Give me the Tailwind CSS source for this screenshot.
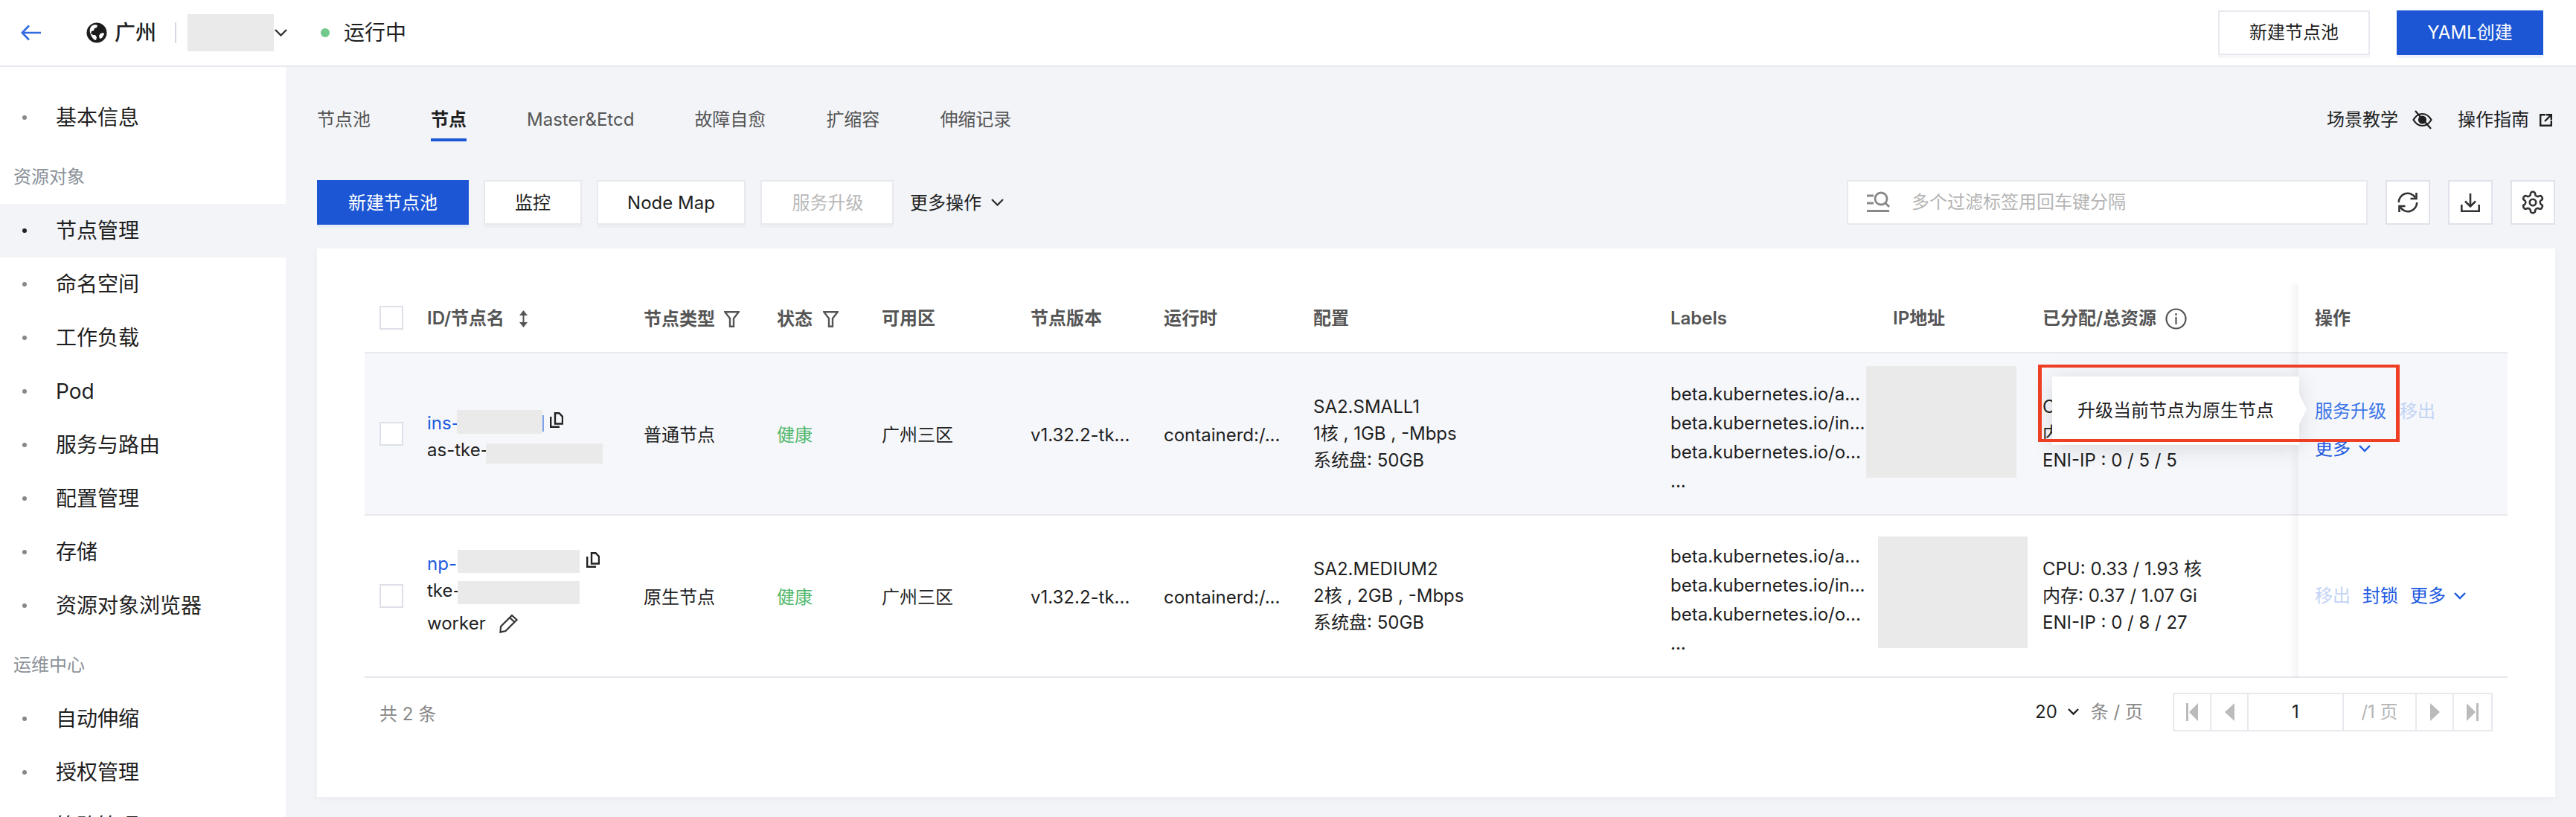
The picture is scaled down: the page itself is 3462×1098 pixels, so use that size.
<!DOCTYPE html>
<html lang="zh-CN">
<head>
<meta charset="utf-8">
<script src="https://cdn.jsdelivr.net/npm/@tailwindcss/browser@4"></script>
</head>
<body>
<div class="w-[3462px] h-[1098px] overflow-hidden bg-[#f2f4f8] flex flex-col text-[24px] text-[#1f1f1f] [font-family:Inter,'Noto_Sans_CJK_SC',sans-serif]">

  <header class="h-[90px] shrink-0 bg-white border-b-2 border-[#e8e9ef] flex items-center pl-[28px] pr-[44px]">
    <svg class="w-[27px] h-[22px]" viewBox="0 0 27 22" fill="none" stroke="#2f6bdf" stroke-width="2.6"><path d="M27 11H2M11 1.5 1.8 11l9.2 9.5"/></svg>
    <svg class="w-[28px] h-[28px] ml-[61px]" viewBox="0 0 28 28"><circle cx="14" cy="14" r="13.5" fill="#1c1c1c"/><path d="M7 5c3-2 6-2 8-1l-1 3-3 1-1 3-3 1-1 3 3 2 3 0 2 3-1 4-3-1-3-4-2-5c-1-3 0-7 2-9zM19 15l4-1 1 2-3 5-3 1-1-4z" fill="#fff"/></svg>
    <span class="ml-[10px] text-[28px] font-medium">广州</span>
    <span class="ml-[25px] w-[2px] h-[28px] bg-[#d4d9e4]"></span>
    <span class="ml-[15px] w-[116px] h-[50px] bg-[#eaeaea]"></span>
    <svg class="ml-[1px] w-[17px] h-[10px]" viewBox="0 0 17 10" fill="none" stroke="#333" stroke-width="2.4"><path d="M1 1l7.500 7.500L16 1"/></svg>
    <span class="ml-[45px] w-[12px] h-[12px] rounded-full bg-[#71c98b]"></span>
    <span class="ml-[19px] text-[28px]">运行中</span>
    <div class="ml-auto flex gap-[36px]">
      <button class="w-[204px] h-[60px] bg-white border-2 border-[#e8e9ef] shadow-[0_4px_0_#f7f7fa]">新建节点池</button>
      <button class="w-[197px] h-[60px] bg-[#1c56d4] text-white shadow-[0_4px_0_#eef3fb]">YAML创建</button>
    </div>
  </header>

  <div class="flex flex-1 min-h-0">
    <aside class="w-[384px] shrink-0 bg-white pt-[32px] text-[28px] overflow-hidden">
      <div class="h-[72px] flex items-center pl-[30px]"><span class="w-[6px] h-[6px] rounded-full bg-[#888]"></span><span class="ml-[39px]">基本信息</span></div>
      <div class="h-[80px] pt-[8px] flex items-center pl-[18px] text-[24px] text-[#8b9299]">资源对象</div>
      <div class="h-[72px] flex items-center pl-[30px] bg-[#f2f4f8]"><span class="w-[6px] h-[6px] rounded-full bg-[#222]"></span><span class="ml-[39px]">节点管理</span></div>
      <div class="h-[72px] flex items-center pl-[30px]"><span class="w-[6px] h-[6px] rounded-full bg-[#888]"></span><span class="ml-[39px]">命名空间</span></div>
      <div class="h-[72px] flex items-center pl-[30px]"><span class="w-[6px] h-[6px] rounded-full bg-[#888]"></span><span class="ml-[39px]">工作负载</span></div>
      <div class="h-[72px] flex items-center pl-[30px]"><span class="w-[6px] h-[6px] rounded-full bg-[#888]"></span><span class="ml-[39px]">Pod</span></div>
      <div class="h-[72px] flex items-center pl-[30px]"><span class="w-[6px] h-[6px] rounded-full bg-[#888]"></span><span class="ml-[39px]">服务与路由</span></div>
      <div class="h-[72px] flex items-center pl-[30px]"><span class="w-[6px] h-[6px] rounded-full bg-[#888]"></span><span class="ml-[39px]">配置管理</span></div>
      <div class="h-[72px] flex items-center pl-[30px]"><span class="w-[6px] h-[6px] rounded-full bg-[#888]"></span><span class="ml-[39px]">存储</span></div>
      <div class="h-[72px] flex items-center pl-[30px]"><span class="w-[6px] h-[6px] rounded-full bg-[#888]"></span><span class="ml-[39px]">资源对象浏览器</span></div>
      <div class="h-[80px] pt-[8px] flex items-center pl-[18px] text-[24px] text-[#8b9299]">运维中心</div>
      <div class="h-[72px] flex items-center pl-[30px]"><span class="w-[6px] h-[6px] rounded-full bg-[#888]"></span><span class="ml-[39px]">自动伸缩</span></div>
      <div class="h-[72px] flex items-center pl-[30px]"><span class="w-[6px] h-[6px] rounded-full bg-[#888]"></span><span class="ml-[39px]">授权管理</span></div>
      <div class="h-[72px] flex items-center pl-[30px]"><span class="w-[6px] h-[6px] rounded-full bg-[#888]"></span><span class="ml-[39px]">策略管理</span></div>
    </aside>

    <main class="flex-1 min-w-0 pl-[42px] pr-[28px] pt-[42px]">
      <div class="flex items-start justify-between">
        <nav class="flex gap-[81px] text-[#555]">
          <a class="h-[58px] pt-[4px] border-b-4 border-transparent flex items-center">节点池</a>
          <a class="h-[58px] pt-[4px] border-b-4 border-[#1c56d4] flex items-center font-semibold text-[#1f1f1f]">节点</a>
          <a class="h-[58px] pt-[4px] border-b-4 border-transparent flex items-center">Master&amp;Etcd</a>
          <a class="h-[58px] pt-[4px] border-b-4 border-transparent flex items-center">故障自愈</a>
          <a class="h-[58px] pt-[4px] border-b-4 border-transparent flex items-center">扩缩容</a>
          <a class="h-[58px] pt-[4px] border-b-4 border-transparent flex items-center">伸缩记录</a>
        </nav>
        <div class="flex items-center h-[58px] pr-[4px]">
          <span>场景教学</span>
          <svg class="ml-[19px] w-[27px] h-[26px]" viewBox="0 0 27 26" fill="none" stroke="#1f1f1f" stroke-width="2.200"><path d="M1.500 13C5 7 9 5 13.500 5S22 7 25.500 13C22 19 18 21 13.500 21S5 19 1.500 13z"/><circle cx="13.500" cy="13" r="4.500" fill="#1f1f1f"/><path d="M4 1l21 24"/></svg>
          <span class="ml-[34px]">操作指南</span>
          <svg class="ml-[14px] w-[17px] h-[17px]" viewBox="0 0 17 17" fill="none" stroke="#1f1f1f" stroke-width="2.400"><path d="M8 1.200H1.200v14.600h14.600V9M9 1.200h6.800V8M15.500 1.500 7 10"/></svg>
        </div>
      </div>

      <div class="mt-[52px] flex items-center h-[60px]">
        <button class="w-[204px] h-[60px] pt-[2px] bg-[#1c56d4] text-white shadow-[0_4px_0_#e6ecf5]">新建节点池</button>
        <button class="ml-[20px] w-[132px] h-[60px] pt-[2px] bg-white border-2 border-[#e8e9ef] shadow-[0_4px_0_#eceef4]">监控</button>
        <button class="ml-[20px] w-[200px] h-[60px] pt-[2px] bg-white border-2 border-[#e8e9ef] shadow-[0_4px_0_#eceef4]">Node Map</button>
        <button class="ml-[20px] w-[179px] h-[60px] pt-[2px] pl-[2px] bg-white border-2 border-[#e8e9ef] text-[#b9b9b9] shadow-[0_4px_0_#eceef4]">服务升级</button>
        <span class="ml-[22px] pt-[2px]">更多操作</span>
        <svg class="ml-[13px] w-[17px] h-[10px]" viewBox="0 0 17 10" fill="none" stroke="#333" stroke-width="2.400"><path d="M1 1l7.500 7.500L16 1"/></svg>
        <div class="ml-auto w-[700px] h-[60px] bg-white border-2 border-[#e8e9ef] flex items-center pl-[24px]">
          <svg class="w-[32px] h-[32px]" viewBox="0 0 32 32" fill="none" stroke="#888" stroke-width="2.800"><path d="M1 7h9M1 17h9M1 27.500h30"/><circle cx="20" cy="11" r="8"/><path d="M26 17l5 5"/></svg>
          <span class="ml-[29px] text-[#b5b5b5]">多个过滤标签用回车键分隔</span>
        </div>
        <button class="ml-[24px] w-[60px] h-[60px] bg-white border-2 border-[#e0e2ea] flex items-center justify-center">
          <svg class="w-[28px] h-[28px]" viewBox="0 0 28 28" fill="none" stroke="#333" stroke-width="2.600"><path d="M1.800 14A12 12 0 0 1 24 7.500M26.200 14A12 12 0 0 1 4 20.500"/><path d="M25.500 1v8h-8M2.500 27v-8h8"/></svg>
        </button>
        <button class="ml-[24px] w-[60px] h-[60px] bg-white border-2 border-[#e0e2ea] flex items-center justify-center">
          <svg class="w-[26px] h-[25px]" viewBox="0 0 26 25" fill="none" stroke="#333" stroke-width="2.600"><path d="M13 0v17M6 10.500l7 7 7-7M1.300 15v8.700h23.400V15"/></svg>
        </button>
        <button class="ml-[24px] w-[60px] h-[60px] bg-white border-2 border-[#e0e2ea] flex items-center justify-center">
          <svg class="w-[34px] h-[34px]" viewBox="0 0 24 24" fill="none" stroke="#333" stroke-width="1.800"><path d="M12.220 2h-.44a2 2 0 0 0-2 2v.18a2 2 0 0 1-1 1.730l-.43.25a2 2 0 0 1-2 0l-.15-.08a2 2 0 0 0-2.730.73l-.22.38a2 2 0 0 0 .73 2.730l.15.1a2 2 0 0 1 1 1.720v.51a2 2 0 0 1-1 1.740l-.15.09a2 2 0 0 0-.73 2.730l.22.38a2 2 0 0 0 2.730.73l.15-.08a2 2 0 0 1 2 0l.43.25a2 2 0 0 1 1 1.730V20a2 2 0 0 0 2 2h.44a2 2 0 0 0 2-2v-.18a2 2 0 0 1 1-1.730l.43-.25a2 2 0 0 1 2 0l.15.08a2 2 0 0 0 2.730-.73l.22-.39a2 2 0 0 0-.73-2.730l-.15-.08a2 2 0 0 1-1-1.740v-.5a2 2 0 0 1 1-1.740l.15-.09a2 2 0 0 0 .73-2.730l-.22-.38a2 2 0 0 0-2.730-.73l-.15.08a2 2 0 0 1-2 0l-.43-.25a2 2 0 0 1-1-1.730V4a2 2 0 0 0-2-2z"/><circle cx="12" cy="12" r="3"/></svg>
        </button>
      </div>

      <section class="relative mt-[32px] h-[737px] bg-white px-[64px] pt-[47px] shadow-[0_4px_10px_rgba(0,0,0,0.03)]">
        <div class="relative">
          <!-- header -->
          <div class="grid grid-cols-[84px_291px_179px_141px_200px_179px_201px_480px_299px_201px_366px_259px] h-[94px] border-b-2 border-[#e8e9ef] items-center font-semibold text-[#555]">
            <div class="pl-[20px]"><span class="block w-[32px] h-[32px] border-2 border-[#dde0e8] bg-white"></span></div>
            <div class="flex items-center gap-[20px] pt-[2px]">ID/节点名
              <svg class="w-[11px] h-[23px]" viewBox="0 0 11 23" fill="#555"><path d="M5.500 0 11 7H0zM5.500 23 0 16h11zM4.500 6h2v11h-2z"/></svg>
            </div>
            <div class="flex items-center gap-[12px] pt-[3px]">节点类型
              <svg class="w-[21px] h-[22px]" viewBox="0 0 21 22" fill="none" stroke="#555" stroke-width="2.400"><path d="M1.200 1.200h18.600L13 10v10.800H8V10z"/></svg>
            </div>
            <div class="flex items-center gap-[14px] pt-[3px]">状态
              <svg class="w-[21px] h-[22px]" viewBox="0 0 21 22" fill="none" stroke="#555" stroke-width="2.400"><path d="M1.200 1.200h18.600L13 10v10.800H8V10z"/></svg>
            </div>
            <div class="pt-[2px]">可用区</div>
            <div class="pt-[2px]">节点版本</div>
            <div class="pt-[2px]">运行时</div>
            <div class="pt-[2px]">配置</div>
            <div class="pt-[2px]">Labels</div>
            <div class="pt-[2px]">IP地址</div>
            <div class="flex items-center gap-[12px] pt-[2px]">已分配/总资源
              <svg class="w-[29px] h-[29px]" viewBox="0 0 29 29" fill="none" stroke="#555" stroke-width="2.200"><circle cx="14.500" cy="14.500" r="13"/><path d="M14.500 12v10M14.500 7v3"/></svg>
            </div>
            <div class="pt-[2px]">操作</div>
          </div>

          <!-- row 1 -->
          <div class="grid grid-cols-[84px_291px_179px_141px_200px_179px_201px_480px_299px_201px_366px_259px] h-[218px] border-b-2 border-[#e8e9ef] bg-[#f6f7fb] items-center">
            <div class="pl-[20px]"><span class="block w-[32px] h-[32px] border-2 border-[#dde0e8] bg-white"></span></div>
            <div class="relative top-[4px]">
              <div class="relative h-[36px] flex items-center text-[#1c5ae0]">ins-
                <span class="absolute left-[40px] top-[0px] w-[115px] h-[32px] bg-[#eaeaea]"></span>
                <span class="absolute left-[155px] top-[7px] w-[2px] h-[22px] bg-[#7fa3ea]"></span>
                <svg class="absolute left-[165px] top-[3px] w-[18px] h-[21px]" viewBox="0 0 18 21" fill="none" stroke="#222" stroke-width="2.400"><path d="M7 1.200h5.500L17 6v9.500H7z"/><path d="M1.200 6v13.800H13"/></svg>
              </div>
              <div class="relative h-[36px] flex items-center">as-tke-
                <span class="absolute left-[79px] top-[9px] w-[157px] h-[27px] bg-[#eaeaea]"></span>
              </div>
            </div>
            <div class="pt-[3px]">普通节点</div>
            <div class="pt-[3px] text-[#52b86c]">健康</div>
            <div class="pt-[3px]">广州三区</div>
            <div class="pt-[3px]">v1.32.2-tk...</div>
            <div class="pt-[3px]">containerd:/...</div>
            <div class="leading-[36px]"><div>SA2.SMALL1</div><div>1核 , 1GB , -Mbps</div><div>系统盘: 50GB</div></div>
            <div class="leading-[39px] relative top-[5px]"><div>beta.kubernetes.io/a...</div><div>beta.kubernetes.io/in...</div><div>beta.kubernetes.io/o...</div><div>...</div></div>
            <div class="relative self-stretch"><span class="absolute -left-[36px] top-[17px] w-[202px] h-[150px] bg-[#eaeaea]"></span></div>
            <div class="leading-[36px]"><div>CPU: 0.13 / 0.94 核</div><div>内存: 0.28 / 0.41 Gi</div><div>ENI-IP : 0 / 5 / 5</div></div>
            <div class="flex flex-col gap-[14px] leading-[36px] pb-[10px]">
              <div class="flex gap-[18px]"><span class="text-[#3d76e6]">服务升级</span><span class="text-[#c3d3f5]">移出</span></div>
              <div class="flex items-center gap-[11px] text-[#1c5ae0]">更多<svg class="w-[16px] h-[10px]" viewBox="0 0 16 10" fill="none" stroke="#1c5ae0" stroke-width="2.400"><path d="M1 1l7 7 7-7"/></svg></div>
            </div>
          </div>

          <!-- row 2 -->
          <div class="grid grid-cols-[84px_291px_179px_141px_200px_179px_201px_480px_299px_201px_366px_259px] h-[218px] border-b-2 border-[#e8e9ef] items-center">
            <div class="pl-[20px]"><span class="block w-[32px] h-[32px] border-2 border-[#dde0e8] bg-white"></span></div>
            <div class="relative top-[1px]">
              <div class="relative h-[36px] flex items-center text-[#1c5ae0]">np-
                <span class="absolute left-[41px] -top-[1px] w-[164px] h-[31px] bg-[#eaeaea]"></span>
                <svg class="absolute left-[214px] top-[2px] w-[18px] h-[21px]" viewBox="0 0 18 21" fill="none" stroke="#222" stroke-width="2.400"><path d="M7 1.200h5.500L17 6v9.500H7z"/><path d="M1.200 6v13.800H13"/></svg>
              </div>
              <div class="relative h-[36px] flex items-center">tke-
                <span class="absolute left-[41px] top-[5px] w-[164px] h-[31px] bg-[#eaeaea]"></span>
              </div>
              <div class="h-[52px] flex items-center">worker
                <svg class="ml-[18px] w-[26px] h-[26px]" viewBox="0 0 26 26" fill="none" stroke="#333" stroke-width="2.200"><path d="M1.500 24.500 2 17 17 2l6.500 6-15 15zM14 5l6.500 6"/></svg>
              </div>
            </div>
            <div class="pt-[3px]">原生节点</div>
            <div class="pt-[3px] text-[#52b86c]">健康</div>
            <div class="pt-[3px]">广州三区</div>
            <div class="pt-[3px]">v1.32.2-tk...</div>
            <div class="pt-[3px]">containerd:/...</div>
            <div class="leading-[36px]"><div>SA2.MEDIUM2</div><div>2核 , 2GB , -Mbps</div><div>系统盘: 50GB</div></div>
            <div class="leading-[39px] relative top-[5px]"><div>beta.kubernetes.io/a...</div><div>beta.kubernetes.io/in...</div><div>beta.kubernetes.io/o...</div><div>...</div></div>
            <div class="relative self-stretch"><span class="absolute -left-[20px] top-[28px] w-[201px] h-[150px] bg-[#eaeaea]"></span></div>
            <div class="leading-[36px]"><div>CPU: 0.33 / 1.93 核</div><div>内存: 0.37 / 1.07 Gi</div><div>ENI-IP : 0 / 8 / 27</div></div>
            <div class="flex items-center gap-[16px]">
              <span class="text-[#c3d3f5]">移出</span><span class="text-[#1c5ae0]">封锁</span>
              <span class="flex items-center gap-[11px] text-[#1c5ae0]">更多<svg class="w-[16px] h-[10px]" viewBox="0 0 16 10" fill="none" stroke="#1c5ae0" stroke-width="2.400"><path d="M1 1l7 7 7-7"/></svg></span>
            </div>
          </div>

          <!-- fixed column shadow -->
          <div class="absolute left-[2585px] top-0 bottom-0 w-[14px] bg-gradient-to-r from-transparent to-black/[0.04]"></div>
        </div>

        <!-- footer -->
        <div class="mt-[20px] px-[20px] h-[52px] flex items-center">
          <span class="text-[#888] pt-[6px]">共 2 条</span>
          <span class="ml-auto">20</span>
          <svg class="ml-[14px] w-[15px] h-[10px]" viewBox="0 0 15 10" fill="none" stroke="#222" stroke-width="2.400"><path d="M1 1l6.500 6.500L14 1"/></svg>
          <span class="ml-[16px] text-[#888]">条 / 页</span>
          <div class="ml-[40px] h-[52px] w-[430px] flex border-2 border-[#e8e9ef] divide-x-2 divide-[#e8e9ef]">
            <div class="w-[50px] flex items-center justify-center"><svg class="w-[16px] h-[24px]" viewBox="0 0 16 24" fill="#bbb"><path d="M0 0h3v24H0zM16 0v24L4 12z"/></svg></div>
            <div class="w-[50px] flex items-center justify-center"><svg class="w-[13px] h-[24px]" viewBox="0 0 13 24" fill="#bbb"><path d="M13 0v24L0 12z"/></svg></div>
            <div class="w-[128px] flex items-center justify-center">1</div>
            <div class="w-[98px] flex items-center justify-center text-[#b5b5b5]">/1 页</div>
            <div class="w-[50px] flex items-center justify-center"><svg class="w-[13px] h-[24px]" viewBox="0 0 13 24" fill="#bbb"><path d="M0 0v24l13-12z"/></svg></div>
            <div class="flex-1 flex items-center justify-center"><svg class="w-[16px] h-[24px]" viewBox="0 0 16 24" fill="#bbb"><path d="M13 0h3v24h-3zM0 0v24l12-12z"/></svg></div>
          </div>
        </div>

        <!-- tooltip -->
        <div class="absolute left-[2332px] top-[172px] w-[332px] h-[92px] bg-white shadow-[0_4px_28px_rgba(0,0,0,0.13)] flex items-center pl-[34px]">
          升级当前节点为原生节点
          <span class="absolute left-full top-[24px] border-y-[20px] border-y-transparent border-l-[10px] border-l-white"></span>
        </div>
        <!-- annotation -->
        <div class="absolute left-[2313px] top-[156px] w-[486px] h-[104px] border-x-[5px] border-y-4 border-[#ee3f24]"></div>
      </section>
    </main>
  </div>
</div>
</body>
</html>
